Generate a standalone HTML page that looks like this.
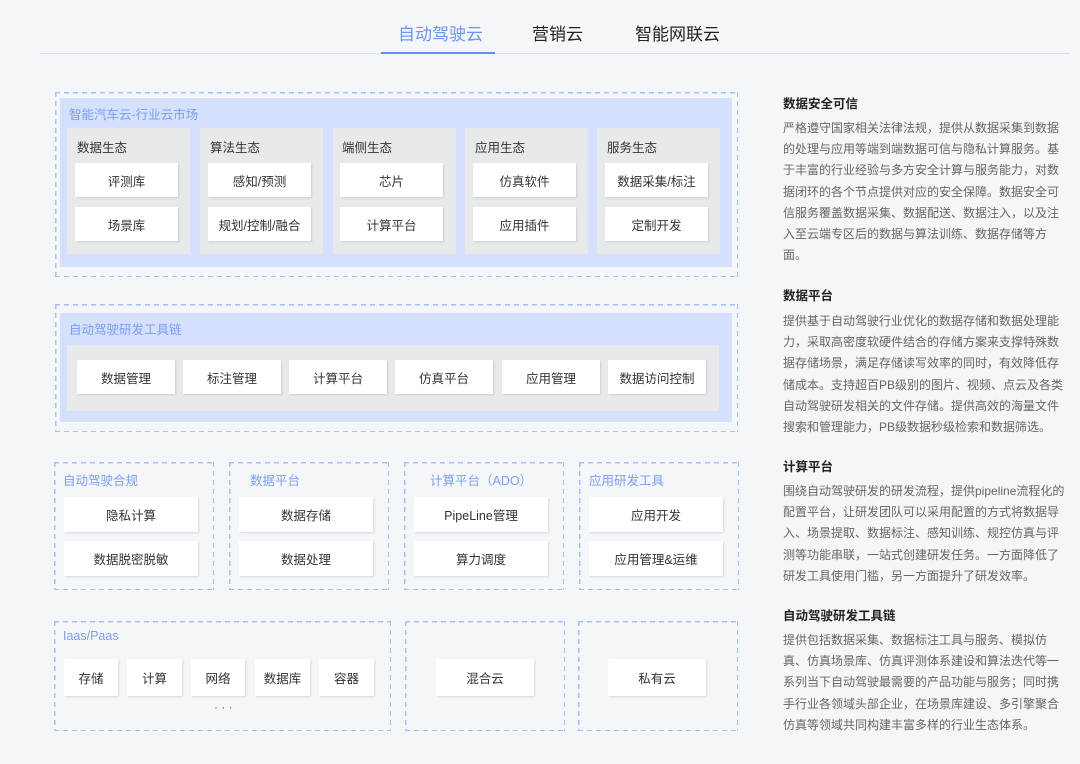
<!DOCTYPE html>
<html><head><meta charset="utf-8"><style>
*{margin:0;padding:0;box-sizing:border-box}
body{width:1080px;height:764px;background:#f5f6fa;font-family:"Liberation Sans","Noto Sans CJK SC",sans-serif;position:relative;overflow:hidden;color:#333}
.a{position:absolute}
.tab{position:absolute;top:20px;font-size:17px;color:#222;white-space:nowrap}
.dash{position:absolute;
background:
repeating-linear-gradient(90deg,#a6c1f6 0 5px,transparent 5px 9px) top left/100% 1.5px no-repeat,
repeating-linear-gradient(90deg,#a6c1f6 0 5px,transparent 5px 9px) bottom left/100% 1.5px no-repeat,
repeating-linear-gradient(180deg,#a6c1f6 0 5px,transparent 5px 9px) top left/1.5px 100% no-repeat,
repeating-linear-gradient(180deg,#a6c1f6 0 5px,transparent 5px 9px) top right/1.5px 100% no-repeat}
.blue{position:absolute;background:#d4e0fc}
.gray{position:absolute;background:#e8e9eb}
.w{position:absolute;background:#fff;font-size:12.5px;color:#333;display:flex;align-items:center;justify-content:center;box-shadow:1px 1px 2px rgba(0,0,0,.12);white-space:nowrap}
.bt{position:absolute;font-size:12.5px;color:#7d9ef0;white-space:nowrap}
.gt{position:absolute;font-size:12.5px;color:#333;white-space:nowrap}
.h{position:absolute;left:783px;font-size:12.5px;color:#222;font-weight:bold;white-space:nowrap}
.p{position:absolute;left:783px;font-size:12px;line-height:21.2px;color:#666;white-space:nowrap}
</style></head><body>
<div class="tab" style="left:398px;color:#6c95f5">自动驾驶云</div>
<div class="tab" style="left:532px">营销云</div>
<div class="tab" style="left:635px">智能网联云</div>
<div class="a" style="left:40px;top:53px;width:1030px;height:1px;background:#dcdde2"></div>
<div class="a" style="left:381px;top:52px;width:114px;height:2px;background:#5b8ff5"></div>

<!-- box1 -->
<div class="dash" style="left:55px;top:92px;width:683px;height:185px"></div>
<div class="blue" style="left:60px;top:98px;width:672px;height:169px"></div>
<div class="bt" style="left:69px;top:104px">智能汽车云-行业云市场</div>
<div class="gray" style="left:67px;top:128px;width:123px;height:126px"></div>
<div class="gray" style="left:200px;top:128px;width:123px;height:126px"></div>
<div class="gray" style="left:333px;top:128px;width:123px;height:126px"></div>
<div class="gray" style="left:465px;top:128px;width:123px;height:126px"></div>
<div class="gray" style="left:597px;top:128px;width:123px;height:126px"></div>
<div class="gt" style="left:77px;top:137px">数据生态</div>
<div class="gt" style="left:210px;top:137px">算法生态</div>
<div class="gt" style="left:342px;top:137px">端侧生态</div>
<div class="gt" style="left:475px;top:137px">应用生态</div>
<div class="gt" style="left:607px;top:137px">服务生态</div>
<div class="w" style="left:75px;top:163px;width:103px;height:34px">评测库</div>
<div class="w" style="left:75px;top:207px;width:103px;height:34px">场景库</div>
<div class="w" style="left:208px;top:163px;width:103px;height:34px">感知/预测</div>
<div class="w" style="left:208px;top:207px;width:103px;height:34px">规划/控制/融合</div>
<div class="w" style="left:340px;top:163px;width:103px;height:34px">芯片</div>
<div class="w" style="left:340px;top:207px;width:103px;height:34px">计算平台</div>
<div class="w" style="left:473px;top:163px;width:103px;height:34px">仿真软件</div>
<div class="w" style="left:473px;top:207px;width:103px;height:34px">应用插件</div>
<div class="w" style="left:605px;top:163px;width:103px;height:34px">数据采集/标注</div>
<div class="w" style="left:605px;top:207px;width:103px;height:34px">定制开发</div>

<!-- box2 -->
<div class="dash" style="left:55px;top:304px;width:683px;height:128px"></div>
<div class="blue" style="left:60px;top:313px;width:672px;height:109px"></div>
<div class="bt" style="left:69px;top:319px">自动驾驶研发工具链</div>
<div class="gray" style="left:67px;top:345px;width:652px;height:66px"></div>
<div class="w" style="left:77px;top:360px;width:98px;height:34px">数据管理</div>
<div class="w" style="left:183px;top:360px;width:98px;height:34px">标注管理</div>
<div class="w" style="left:289px;top:360px;width:98px;height:34px">计算平台</div>
<div class="w" style="left:395px;top:360px;width:98px;height:34px">仿真平台</div>
<div class="w" style="left:502px;top:360px;width:98px;height:34px">应用管理</div>
<div class="w" style="left:608px;top:360px;width:98px;height:34px">数据访问控制</div>

<!-- row3 -->
<div class="dash" style="left:54px;top:462px;width:160px;height:128px"></div>
<div class="dash" style="left:229px;top:462px;width:160px;height:128px"></div>
<div class="dash" style="left:404px;top:462px;width:160px;height:128px"></div>
<div class="dash" style="left:579px;top:462px;width:160px;height:128px"></div>
<div class="bt" style="left:63px;top:470px">自动驾驶合规</div>
<div class="bt" style="left:250px;top:470px">数据平台</div>
<div class="bt" style="left:430px;top:470px">计算平台（ADO）</div>
<div class="bt" style="left:589px;top:470px">应用研发工具</div>
<div class="w" style="left:64px;top:497px;width:134px;height:35px">隐私计算</div>
<div class="w" style="left:64px;top:541px;width:134px;height:35px">数据脱密脱敏</div>
<div class="w" style="left:239px;top:497px;width:134px;height:35px">数据存储</div>
<div class="w" style="left:239px;top:541px;width:134px;height:35px">数据处理</div>
<div class="w" style="left:414px;top:497px;width:134px;height:35px">PipeLine管理</div>
<div class="w" style="left:414px;top:541px;width:134px;height:35px">算力调度</div>
<div class="w" style="left:589px;top:497px;width:134px;height:35px">应用开发</div>
<div class="w" style="left:589px;top:541px;width:134px;height:35px">应用管理&amp;运维</div>

<!-- row4 -->
<div class="dash" style="left:54px;top:621px;width:337px;height:110px"></div>
<div class="dash" style="left:405px;top:621px;width:160px;height:110px"></div>
<div class="dash" style="left:578px;top:621px;width:160px;height:110px"></div>
<div class="bt" style="left:63px;top:629px">Iaas/Paas</div>
<div class="w" style="left:64px;top:659px;width:54px;height:37px">存储</div>
<div class="w" style="left:127px;top:659px;width:55px;height:37px">计算</div>
<div class="w" style="left:191px;top:659px;width:54px;height:37px">网络</div>
<div class="w" style="left:255px;top:659px;width:55px;height:37px">数据库</div>
<div class="w" style="left:319px;top:659px;width:55px;height:37px">容器</div>
<div class="a" style="left:214px;top:700px;font-size:12px;color:#666">· · ·</div>
<div class="w" style="left:436px;top:659px;width:98px;height:37px">混合云</div>
<div class="w" style="left:608px;top:659px;width:98px;height:37px">私有云</div>

<!-- right text -->
<div class="h" style="top:93px">数据安全可信</div>
<div class="p" style="top:118px">严格遵守国家相关法律法规，提供从数据采集到数据<br>的处理与应用等端到端数据可信与隐私计算服务。基<br>于丰富的行业经验与多方安全计算与服务能力，对数<br>据闭环的各个节点提供对应的安全保障。数据安全可<br>信服务覆盖数据采集、数据配送、数据注入，以及注<br>入至云端专区后的数据与算法训练、数据存储等方<br>面。</div>
<div class="h" style="top:285px">数据平台</div>
<div class="p" style="top:311px">提供基于自动驾驶行业优化的数据存储和数据处理能<br>力，采取高密度软硬件结合的存储方案来支撑特殊数<br>据存储场景，满足存储读写效率的同时，有效降低存<br>储成本。支持超百PB级别的图片、视频、点云及各类<br>自动驾驶研发相关的文件存储。提供高效的海量文件<br>搜索和管理能力，PB级数据秒级检索和数据筛选。</div>
<div class="h" style="top:456px">计算平台</div>
<div class="p" style="top:481px">围绕自动驾驶研发的研发流程，提供pipeline流程化的<br>配置平台，让研发团队可以采用配置的方式将数据导<br>入、场景提取、数据标注、感知训练、规控仿真与评<br>测等功能串联，一站式创建研发任务。一方面降低了<br>研发工具使用门槛，另一方面提升了研发效率。</div>
<div class="h" style="top:605px">自动驾驶研发工具链</div>
<div class="p" style="top:630px">提供包括数据采集、数据标注工具与服务、模拟仿<br>真、仿真场景库、仿真评测体系建设和算法迭代等一<br>系列当下自动驾驶最需要的产品功能与服务；同时携<br>手行业各领域头部企业，在场景库建设、多引擎聚合<br>仿真等领域共同构建丰富多样的行业生态体系。</div>
</body></html>
